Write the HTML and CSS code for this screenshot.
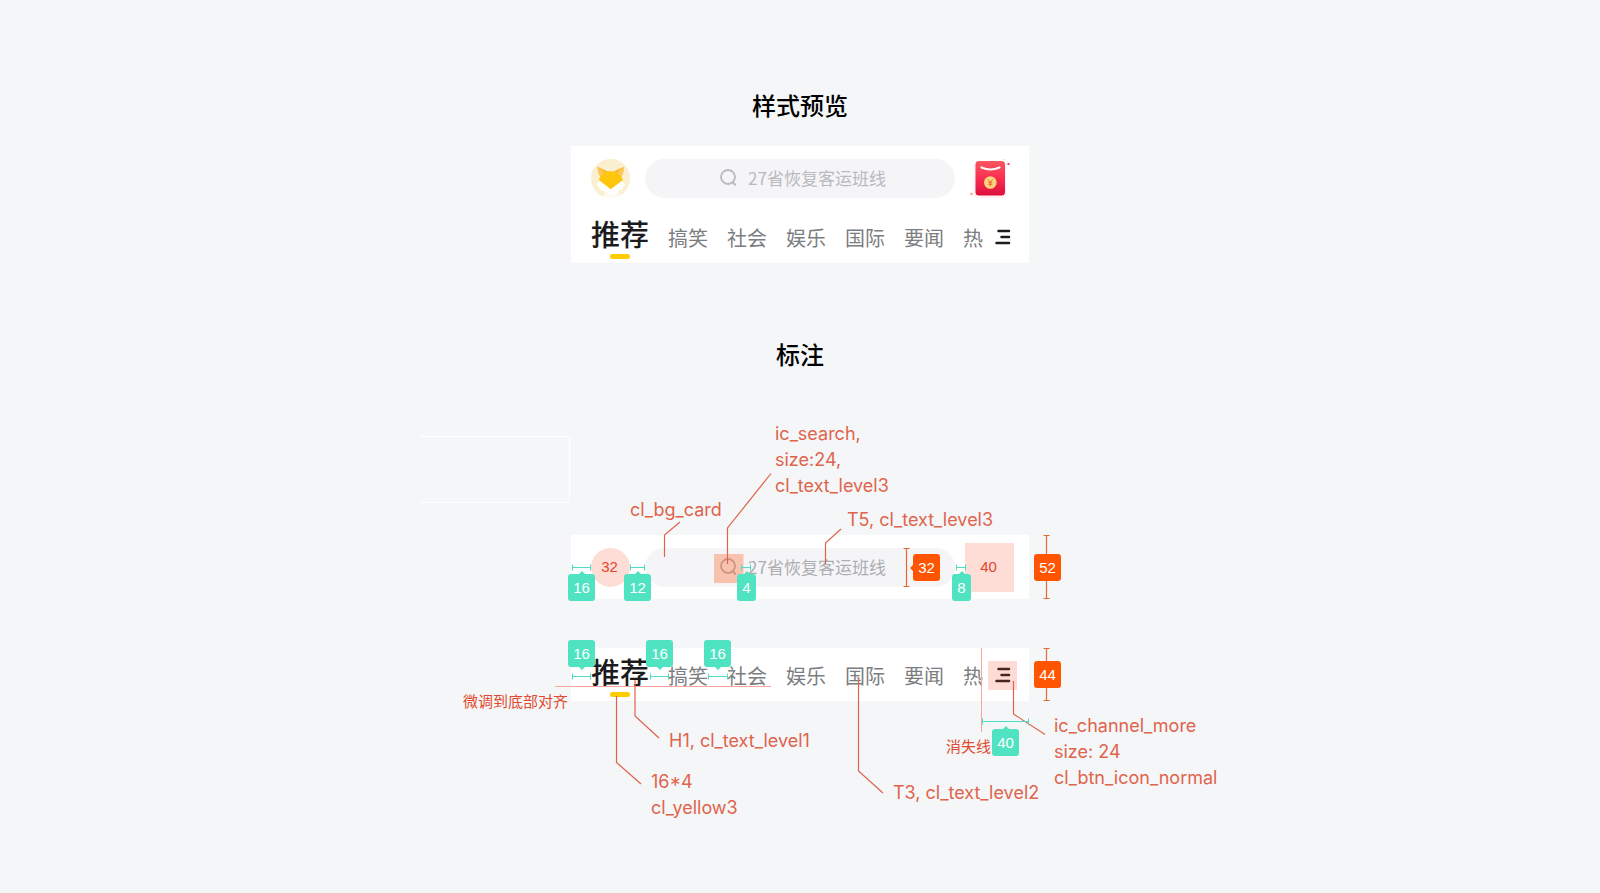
FILE: index.html
```html
<!DOCTYPE html>
<html lang="zh-CN">
<head>
<meta charset="utf-8">
<title>样式预览</title>
<link rel="stylesheet" href="styles.css">
</head>
<body>
<svg class="sprite" aria-hidden="true">
  <symbol id="ic-search" viewBox="0 0 29 29">
    <circle cx="14" cy="14" r="7" fill="none" stroke="currentColor" stroke-width="1.8"/>
    <path d="M18.800 19.300l2.400 2.400" fill="none" stroke="currentColor" stroke-width="2" stroke-linecap="round"/>
  </symbol>
  <symbol id="ic-more" viewBox="0 0 29 29">
    <path d="M10.500 9H21M13.500 15H21M8.500 21H21" fill="none" stroke="currentColor" stroke-width="2.500" stroke-linecap="round"/>
  </symbol>
</svg>
<main class="page">
  <section class="preview">
    <h2 class="title">样式预览</h2>
    <div class="card">
      <div class="search-row">
        <svg class="avatar" viewBox="0 0 39 39" role="img" aria-label="头像">
          <defs>
            <clipPath id="round"><circle cx="19.500" cy="19.500" r="19.500"/></clipPath>
            <linearGradient id="chest" x1="0" y1="0" x2="0" y2="1"><stop offset="0" stop-color="#fdf3dc"/><stop offset="1" stop-color="#fffcf5"/></linearGradient>
          </defs>
          <g clip-path="url(#round)">
            <rect width="39" height="39" fill="#fbefd2"/>
            <path d="M11 30H28.500L29 39H12L13.500 33z" fill="url(#chest)"/>
            <path d="M5.500 25L9.500 21L19.500 28L30 21L34 25.500L30.500 30.500L27.500 31.500L25.500 35L19.500 36.500L14 32.500L9.500 31z" fill="#fff"/>
            <path d="M6.300 7.800L16.500 12.300L9.500 18.500Q6.500 13.500 6.300 7.800zM33.200 7.800L23 12.300L30 18.500Q33 13.500 33.200 7.800z" fill="#fbb32c"/>
            <path d="M6.300 7.800L14 14L9.500 18.500Q6.500 13.500 6.300 7.800zM33.200 7.800L25.500 14L30 18.500Q33 13.500 33.200 7.800z" fill="#fdc95a"/>
            <path d="M16 12.300H23.500L30 17L32 21L19.700 30.300L7.800 21L9.500 17z" fill="#ffc60f"/>
          </g>
        </svg>
        <button class="search" type="button"><svg class="icon"><use href="#ic-search"/></svg><span>27省恢复客运班线</span></button>
        <svg class="packet" viewBox="0 0 49 49" role="img" aria-label="红包">
          <defs><linearGradient id="red" x1="0" y1="0" x2="0" y2="1"><stop offset="0" stop-color="#f9565f"/><stop offset=".5" stop-color="#fb2e50"/><stop offset="1" stop-color="#dc0f3c"/></linearGradient></defs>
          <rect x="9" y="8" width="32" height="36" rx="4" fill="#fff0f2"/>
          <rect x="10.500" y="7" width="29.500" height="34.500" rx="3.500" fill="url(#red)"/>
          <path d="M16.500 13.500Q25.500 17.500 34.500 13.500" fill="none" stroke="#fff" stroke-width="2.200" stroke-linecap="round"/>
          <circle cx="25.300" cy="28.500" r="6.300" fill="#fdd57e"/>
          <path d="M23 25.500L25.300 28.300L27.500 25.500M25.300 28.300V32M23.300 28.600H27.300M23.300 30.300H27.300" fill="none" stroke="#ec6a3a" stroke-width="1"/>
          <circle cx="43.500" cy="10" r="1.200" fill="#f0516b"/><circle cx="39" cy="5.500" r=".6" fill="#f7b98e"/><circle cx="6.500" cy="40" r="1.200" fill="#f9a45c"/>
        </svg>
      </div>
      <div class="tab-row">
        <nav class="tabs"><a class="tab active" href="#">推荐</a><a class="tab" href="#">搞笑</a><a class="tab" href="#">社会</a><a class="tab" href="#">娱乐</a><a class="tab" href="#">国际</a><a class="tab" href="#">要闻</a><a class="tab" href="#">热</a></nav>
        <button class="more" type="button" aria-label="更多频道"><svg class="icon"><use href="#ic-more"/></svg></button>
      </div>
    </div>
  </section>

  <section class="spec">
    <h2 class="title">标注</h2>
    <div class="canvas">
      <div class="card">
        <div class="search-row">
          <span class="avatar size-mark">32</span>
          <button class="search" type="button"><svg class="icon"><use href="#ic-search"/></svg><span>27省恢复客运班线</span></button>
          <span class="packet size-mark">40</span>
        </div>
      </div>
      <div class="card">
        <div class="tab-row">
          <nav class="tabs"><a class="tab active" href="#">推荐</a><a class="tab" href="#">搞笑</a><a class="tab" href="#">社会</a><a class="tab" href="#">娱乐</a><a class="tab" href="#">国际</a><a class="tab" href="#">要闻</a><a class="tab" href="#">热</a></nav>
          <button class="more" type="button" aria-label="更多频道"><svg class="icon"><use href="#ic-more"/></svg></button>
        </div>
      </div>

      <div class="ghost"></div>
      <svg class="lines" width="458" height="440" viewBox="0 0 458 440" aria-hidden="true">
        <rect x="143" y="154" width="29.500" height="29" fill="#ff6a2b" fill-opacity=".36"/>
        <rect x="417" y="261" width="29" height="29" fill="#ff4a2e" fill-opacity=".2"/>
        <g class="guide"><path d="M-16 286.500H200M410.500 248V332"/></g>
        <g class="leader">
          <path d="M109 122L93.500 135V157"/>
          <path d="M200 73.500L156.500 128V164"/>
          <path d="M270 129L254.500 143V164"/>
          <path d="M64 280V316L88 338"/>
          <path d="M45.500 296V362.500L70 384"/>
          <path d="M287.500 278V371L312 393"/>
          <path d="M442.500 281V314L474 334.500"/>
        </g>
        <g class="gap">
          <path d="M1.500 167.500H19.500M1.500 164.500v6M19.500 164.500v6"/>
          <path d="M59.500 167.500H73.500M59.500 164.500v6M73.500 164.500v6"/>
          <path d="M170.500 167.500H179.500M170.500 164.500v6M179.500 164.500v6"/>
          <path d="M385.500 167.500H394.500M385.500 164.500v6M394.500 164.500v6"/>
          <path d="M1.500 276.500H19.500M1.500 273.500v6M19.500 273.500v6"/>
          <path d="M79.500 276.500H97.500M79.500 273.500v6M97.500 273.500v6"/>
          <path d="M137.500 276.500H156.500M137.500 273.500v6M156.500 273.500v6"/>
          <path d="M411.500 321.500H457.500M411.500 318.500v6M457.500 318.500v6"/>
        </g>
        <g class="height">
          <path d="M335.500 148.500V186.500M332.500 148.500h6M332.500 186.500h6"/>
          <path d="M475.500 135.500V198.500M472.500 135.500h6M472.500 198.500h6"/>
          <path d="M475.500 248.500V300.500M472.500 248.500h6M472.500 300.500h6"/>
        </g>
      </svg>

      <span class="tag up g1">16</span>
      <span class="tag up g2">12</span>
      <span class="tag up slim g3">4</span>
      <span class="tag up slim g4">8</span>
      <span class="tag down g5">16</span>
      <span class="tag down g6">16</span>
      <span class="tag down g7">16</span>
      <span class="tag up g8">40</span>
      <span class="tag orange left h1">32</span>
      <span class="tag orange h2">52</span>
      <span class="tag orange h3">44</span>

      <p class="label l-card">cl_bg_card</p>
      <p class="label l-search">ic_search,<br>size:24,<br>cl_text_level3</p>
      <p class="label l-t5">T5, cl_text_level3</p>
      <p class="label l-h1">H1, cl_text_level1</p>
      <p class="label l-bar">16*4<br>cl_yellow3</p>
      <p class="label l-t3">T3, cl_text_level2</p>
      <p class="label l-more">ic_channel_more<br>size: 24<br>cl_btn_icon_normal</p>
      <p class="note n-align">微调到底部对齐</p>
      <p class="note n-fade">消失线</p>
    </div>
  </section>
</main>
</body>
</html>
```
FILE: styles.css
```css
* { box-sizing: border-box; }
body {
  margin: 0;
  background: #f4f6f8;
  color: #1c1c20;
  font-family: "Noto Sans CJK SC", sans-serif;
}
h2, p { margin: 0; }
button { border: 0; padding: 0; background: none; font: inherit; color: inherit; }
a { color: inherit; text-decoration: none; }
.sprite { position: absolute; width: 0; height: 0; }
.page {
  display: flex;
  flex-direction: column;
  align-items: center;
  padding: 87px 0 150px;
}
.preview, .spec { width: 100%; max-width: 458px; }
.title {
  color: #000;
  font-size: 24px;
  font-weight: 500;
  line-height: 36px;
  text-align: center;
}
.preview .card { margin-top: 23px; }
.spec { margin-top: 73px; }
.card { background: #fff; }
.icon { display: block; width: 29px; height: 29px; }

.search-row {
  display: flex;
  align-items: center;
  height: 64px;
  padding: 0 15px 0 20px;
}
.avatar { flex: none; width: 39px; height: 39px; margin-right: 15px; }
.packet { flex: none; width: 49px; height: 49px; margin-left: 10px; }
.search {
  flex: 1;
  display: flex;
  align-items: center;
  justify-content: center;
  gap: 5px;
  height: 39px;
  padding-bottom: 2px;
  border-radius: 20px;
  background: #f5f5f7;
  color: #b9babd;
  font-size: 17px;
}
.spec .search { color: #adaeb1; }
.size-mark {
  display: flex;
  align-items: center;
  justify-content: center;
  padding: 0 2px 2px 0;
  background: #ffddd7;
  color: #e5432a;
  font-family: "Liberation Sans", sans-serif;
  font-size: 15px;
}
.avatar.size-mark { border-radius: 50%; }

.tab-row { display: flex; height: 53px; padding-left: 20px; }
.tabs {
  flex: 1;
  min-width: 0;
  display: flex;
  align-items: baseline;
  gap: 19px;
  white-space: nowrap;
}
.tab { flex: none; color: #7c7d80; font-size: 20px; line-height: 46px; }
.tab.active { position: relative; color: #1c1c20; font-size: 29px; font-weight: 500; }
.tab.active::after {
  content: "";
  position: absolute;
  left: 50%;
  bottom: -3px;
  width: 20px;
  height: 5px;
  margin-left: -10px;
  border-radius: 3px;
  background: #fc0;
}
.more { flex: none; align-self: center; margin: 0 12px 0 7px; }

.canvas {
  position: relative;
  margin-top: 28px;
  padding-top: 135px;
}
.canvas .card + .card { margin-top: 49px; }
.ghost {
  position: absolute;
  left: -151px;
  top: 36px;
  width: 150px;
  height: 67px;
  border: 1px solid #fff;
  border-left: 0;
  border-radius: 0 2px 2px 0;
}
.lines { position: absolute; left: 0; top: 0; overflow: visible; fill: none; }
.guide { stroke: #f9a59b; }
.leader { stroke: #e0644c; stroke-width: 1.2; }
.gap { stroke: #50dcc0; }
.height { stroke: #e76a33; stroke-width: 1.2; }

.tag {
  position: absolute;
  width: 27px;
  height: 27px;
  border-radius: 3px;
  background: #50e3c2;
  color: #fff;
  font: 15px/27px "Liberation Sans", sans-serif;
  text-align: center;
}
.tag.slim { width: 19px; }
.tag.orange { background: #ff5500; }
.tag::before { position: absolute; border: 4px solid transparent; }
.up::before { content: ""; left: 50%; top: -7px; margin-left: -4px; border-bottom-color: #50e3c2; }
.down::before { content: ""; left: 50%; bottom: -7px; margin-left: -4px; border-top-color: #50e3c2; }
.left::before { content: ""; left: -7px; top: 10px; border-right-color: #ff5500; }
.g1, .g2, .g3, .g4 { top: 174px; }
.g5, .g6, .g7 { top: 240px; }
.g1, .g5 { left: -3px; }
.g2 { left: 53px; }
.g3 { left: 166px; }
.g4 { left: 381px; }
.g6 { left: 75px; }
.g7 { left: 133px; }
.g8 { left: 421px; top: 329px; }
.h1 { left: 342px; top: 154px; }
.h2, .h3 { left: 463px; }
.h2 { top: 154px; }
.h3 { top: 261px; }

.label, .note { position: absolute; white-space: nowrap; }
.label {
  color: #e0644c;
  font-family: Inter, "Noto Sans CJK SC", sans-serif;
  font-size: 18px;
  line-height: 26px;
}
.note { color: #e04a2e; font-size: 15px; line-height: 22px; }
.l-card { left: 59px; top: 97px; }
.l-search { left: 204px; top: 21px; }
.l-t5 { left: 276px; top: 107px; }
.l-h1 { left: 98px; top: 328px; }
.l-bar { left: 80px; top: 369px; }
.l-t3 { left: 322px; top: 380px; }
.l-more { left: 483px; top: 313px; }
.n-align { left: -108px; top: 290px; }
.n-fade { left: 375px; top: 335px; }
```
